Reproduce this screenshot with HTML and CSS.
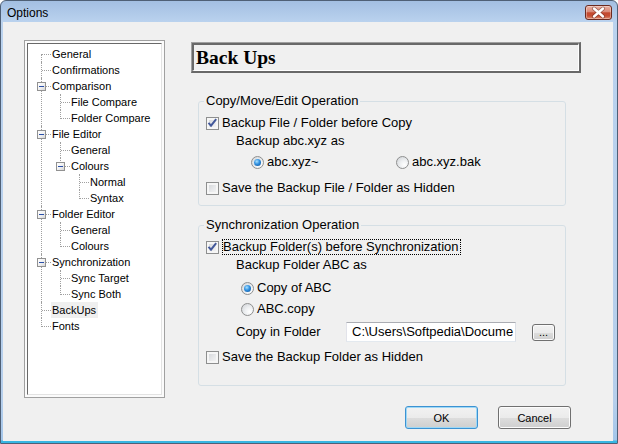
FILE: index.html
```html
<!DOCTYPE html>
<html>
<head>
<meta charset="utf-8">
<title>Options</title>
<link rel="stylesheet" href="styles.css">
</head>
<body>
<div class="window">
  <div class="titlebar">
    <span class="title">Options</span>
    <button class="close" aria-label="Close">
      <svg width="25" height="13" viewBox="0 0 25 13">
        <path d="M8 2.5 L17 10.5 M17 2.5 L8 10.5" stroke="#5a2219" stroke-width="4" stroke-linecap="round" opacity=".5" fill="none"/>
        <path d="M8 2.5 L17 10.5 M17 2.5 L8 10.5" stroke="#fff" stroke-width="2.4" stroke-linecap="round" fill="none"/>
      </svg>
    </button>
  </div>
  <div class="client">
    <div class="main">
      <div class="tree-frame">
        <div class="tree">
          <ul class="tv root">
            <li><div class="row"><span class="lbl">General</span></div></li>
            <li><div class="row"><span class="lbl">Confirmations</span></div></li>
            <li><div class="row"><span class="exp"></span><span class="lbl">Comparison</span></div>
              <ul class="tv">
                <li><div class="row"><span class="lbl">File Compare</span></div></li>
                <li><div class="row"><span class="lbl">Folder Compare</span></div></li>
              </ul>
            </li>
            <li><div class="row"><span class="exp"></span><span class="lbl">File Editor</span></div>
              <ul class="tv">
                <li><div class="row"><span class="lbl">General</span></div></li>
                <li><div class="row"><span class="exp"></span><span class="lbl">Colours</span></div>
                  <ul class="tv">
                    <li><div class="row"><span class="lbl">Normal</span></div></li>
                    <li><div class="row"><span class="lbl">Syntax</span></div></li>
                  </ul>
                </li>
              </ul>
            </li>
            <li><div class="row"><span class="exp"></span><span class="lbl">Folder Editor</span></div>
              <ul class="tv">
                <li><div class="row"><span class="lbl">General</span></div></li>
                <li><div class="row"><span class="lbl">Colours</span></div></li>
              </ul>
            </li>
            <li><div class="row"><span class="exp"></span><span class="lbl">Synchronization</span></div>
              <ul class="tv">
                <li><div class="row"><span class="lbl">Sync Target</span></div></li>
                <li><div class="row"><span class="lbl">Sync Both</span></div></li>
              </ul>
            </li>
            <li class="sel"><div class="row"><span class="lbl">BackUps</span></div></li>
            <li><div class="row"><span class="lbl">Fonts</span></div></li>
          </ul>
        </div>
      </div>

      <div class="panel">
        <div class="header"><div class="header-inner">Back Ups</div></div>

        <fieldset class="group g1">
          <legend>Copy/Move/Edit Operation</legend>
          <div class="line chk sp7">
            <span class="cb"><svg width="11" height="11" viewBox="0 0 11 11"><polyline points="1.5,4.8 4,7.6 9.2,1.2" fill="none" stroke="#43589a" stroke-width="2"/></svg></span>
            <span>Backup File / Folder before Copy</span>
          </div>
          <div class="line ind sp2">Backup abc.xyz as</div>
          <div class="line radios1 sp5">
            <span class="opt wide"><span class="rb on"></span>abc.xyz~</span>
            <span class="opt"><span class="rb"></span>abc.xyz.bak</span>
          </div>
          <div class="line chk sp10">
            <span class="cb"></span>
            <span>Save the Backup File / Folder as Hidden</span>
          </div>
        </fieldset>

        <fieldset class="group g2">
          <legend>Synchronization Operation</legend>
          <div class="line chk sp7">
            <span class="cb"><svg width="11" height="11" viewBox="0 0 11 11"><polyline points="1.5,4.8 4,7.6 9.2,1.2" fill="none" stroke="#43589a" stroke-width="2"/></svg></span>
            <span class="focus">Backup Folder(s) before Synchronization</span>
          </div>
          <div class="line ind sp2">Backup Folder ABC as</div>
          <div class="line radios2 sp7">
            <span class="opt"><span class="rb on"></span>Copy of ABC</span>
          </div>
          <div class="line radios2 sp5">
            <span class="opt"><span class="rb"></span>ABC.copy</span>
          </div>
          <div class="line folder-row sp5">
            <span class="folder-label">Copy in Folder</span>
            <div class="path">C:\Users\Softpedia\Docume</div>
            <button class="browse">...</button>
          </div>
          <div class="line chk sp7">
            <span class="cb"></span>
            <span>Save the Backup Folder as Hidden</span>
          </div>
        </fieldset>
      </div>
    </div>

    <div class="footer">
      <button class="btn default">OK</button>
      <button class="btn">Cancel</button>
    </div>
  </div>
</div>
</body>
</html>
```

FILE: styles.css
```css
* { box-sizing: border-box; }

body {
  margin: 0;
  font-family: "Liberation Sans", Arial, sans-serif;
  font-size: 13px;
  color: #000;
  background: #fff;
}

.window {
  width: 618px;
  height: 444px;
  display: flex;
  flex-direction: column;
  border: 1px solid #4f6076;
  border-radius: 6px 6px 0 0;
  overflow: hidden;
  background: linear-gradient(180deg, #a3bfe2 0px, #bad2ee 21px, #b6cfec 400px, #a4c6ea 439px, #36b6e2 440px, #36b6e2 100%);
}

/* ---------- title bar ---------- */
.titlebar {
  height: 21px;
  flex: none;
  display: flex;
  justify-content: space-between;
  align-items: flex-start;
  padding: 3px 5px 0 6px;
}

.title {
  font-size: 12px;
  line-height: 18px;
  color: #000;
}

.close {
  margin: 1px 0 0 0;
  padding: 0;
  width: 27px;
  height: 15px;
  border: 1px solid #6b2a20;
  border-radius: 3px;
  background: linear-gradient(180deg, #eab0a2 0%, #d98a78 45%, #c3492f 52%, #c54d33 75%, #de8c70 100%);
  box-shadow: inset 0 0 0 1px rgba(255, 255, 255, 0.35);
  display: flex;
  align-items: center;
  justify-content: center;
}

.close svg { display: block; }

/* ---------- client ---------- */
.client {
  flex: 1;
  margin: 0 4px 2px 2px;
  background: #f0f0f0;
  padding: 18px 0 0 21px;
  display: flex;
  flex-direction: column;
}

.main {
  display: flex;
  align-items: flex-start;
  gap: 26px;
}

/* ---------- tree ---------- */
.tree-frame {
  width: 141px;
  height: 358px;
  flex: none;
  border: 1px solid #a0a0a0;
  padding: 2px;
  background: #fbfbfb;
}

.tree {
  height: 100%;
  border: 1px solid;
  border-color: #696969 #e3e3e3 #e3e3e3 #696969;
  background: #fff;
  font-size: 11px;
  overflow: hidden;
}

.tv {
  list-style: none;
  margin: 0;
  padding: 0 0 0 19px;
}

.tv.root {
  padding: 2px 0 0 13px;
}

.tv li {
  position: relative;
}

.tv li::before {
  content: "";
  position: absolute;
  left: 0;
  top: 0;
  bottom: 0;
  border-left: 1px dotted #a0a0a0;
}

.tv li:last-child::before {
  bottom: auto;
  height: 9px;
}

.tv.root > li:first-child::before {
  top: 8px;
}

.row {
  position: relative;
  height: 16px;
  line-height: 16px;
  padding-left: 10px;
  white-space: nowrap;
}

.row::before {
  content: "";
  position: absolute;
  left: 1px;
  top: 8px;
  width: 9px;
  border-top: 1px dotted #a0a0a0;
}

.exp {
  position: absolute;
  left: -4px;
  top: 4px;
  width: 9px;
  height: 9px;
  border: 1px solid #919191;
  background: linear-gradient(135deg, #ffffff 0%, #f2f2f2 50%, #d6d6d6 100%);
  z-index: 1;
}

.exp::after {
  content: "";
  position: absolute;
  left: 1px;
  top: 3px;
  width: 5px;
  height: 1px;
  background: #2a4fa8;
}

.lbl {
  display: inline-block;
  padding: 0 2px 0 1px;
  line-height: 16px;
}

.sel > .row .lbl {
  background: #efefef;
}

/* ---------- right panel ---------- */
.panel {
  width: 390px;
  margin-top: 2px;
}

.header {
  height: 31px;
  border-style: solid;
  border-width: 1px 2px 2px 1px;
  border-color: #a0a0a0 #696969 #696969 #a0a0a0;
}

.header-inner {
  height: 100%;
  border-style: solid;
  border-width: 2px 1px 1px 2px;
  border-color: #696969 #ffffff #ffffff #696969;
  padding-left: 2px;
  font-family: "Liberation Serif", "Times New Roman", serif;
  font-weight: bold;
  font-size: 19.5px;
  line-height: 25px;
}

.group {
  margin: 21px 0 0 7px;
  width: 368px;
  min-width: 0;
  padding: 0 0 9px 0;
  border: 1px solid #d5dfe5;
  border-radius: 3px;
}

.group.g2 {
  margin-top: 12px;
  padding-bottom: 20px;
}

.group legend {
  margin-left: 5px;
  padding: 0 2px;
  font-size: 13px;
  line-height: 14px;
}

.line {
  display: flex;
  align-items: center;
  height: 16px;
  line-height: 16px;
  white-space: nowrap;
}

.sp2 { margin-top: 2px; }
.sp5 { margin-top: 5px; }
.sp7 { margin-top: 7px; }
.sp10 { margin-top: 10px; }

.chk {
  padding-left: 7px;
  gap: 3px;
}

.ind { padding-left: 37px; }

.radios1 { padding-left: 52px; }
.radios2 { padding-left: 42px; }

.opt {
  display: flex;
  align-items: center;
  gap: 3px;
}

.opt.wide { width: 145px; }

/* checkbox */
.cb {
  width: 13px;
  height: 13px;
  flex: none;
  display: flex;
  border: 1px solid #8e8f8f;
  background: linear-gradient(135deg, #cfd2d6 0%, #e8e9eb 55%, #f7f7f7 100%);
  box-shadow: inset 0 0 0 2px #f6f6f6;
}

.cb svg { display: block; }

/* radio */
.rb {
  width: 13px;
  height: 13px;
  flex: none;
  border-radius: 50%;
  border: 1px solid #8e8f8f;
  background: radial-gradient(circle at 68% 70%, #ffffff 0%, #eef0f2 40%, #cdd0d4 100%);
  display: flex;
  align-items: center;
  justify-content: center;
}

.rb.on::after {
  content: "";
  width: 7px;
  height: 7px;
  border-radius: 50%;
  background: radial-gradient(circle at 40% 35%, #a9e2ff 0%, #2f8fe0 45%, #0d4c90 100%);
}

.focus {
  display: inline-block;
  line-height: 14px;
  border: 1px dotted #000;
  padding: 0 1px 0 0;
}

.folder-row {
  height: 20px;
  padding-left: 37px;
}

.folder-label {
  width: 110px;
  flex: none;
}

.path {
  width: 170px;
  height: 20px;
  flex: none;
  border: 1px solid;
  border-color: #abadb3 #dbdfe6 #e3e9ef #e2e3ea;
  background: #fff;
  padding-left: 5px;
  line-height: 18px;
  overflow: hidden;
  white-space: nowrap;
}

.browse {
  margin-left: 16px;
  width: 23px;
  height: 17px;
  padding: 0;
  border: 1px solid #707070;
  border-radius: 3px;
  background: linear-gradient(180deg, #f2f2f2 0%, #ebebeb 50%, #dddddd 51%, #cfcfcf 100%);
  box-shadow: inset 0 0 0 1px #fbfbfb;
  font-family: "Liberation Sans", Arial, sans-serif;
  font-size: 11px;
  line-height: 12px;
  color: #000;
}

/* ---------- footer buttons ---------- */
.footer {
  display: flex;
  justify-content: flex-end;
  gap: 20px;
  padding-right: 42px;
  margin-top: 8px;
}

.btn {
  width: 73px;
  height: 23px;
  padding: 0;
  border: 1px solid #707070;
  border-radius: 3px;
  background: linear-gradient(180deg, #f2f2f2 0%, #ebebeb 50%, #dddddd 51%, #cfcfcf 100%);
  box-shadow: inset 0 0 0 1px #fcfcfc;
  font-family: "Liberation Sans", Arial, sans-serif;
  font-size: 11px;
  color: #000;
}

.btn.default {
  border-color: #3c92d2;
  box-shadow: inset 0 0 0 1px #9ed8f6;
}
```
